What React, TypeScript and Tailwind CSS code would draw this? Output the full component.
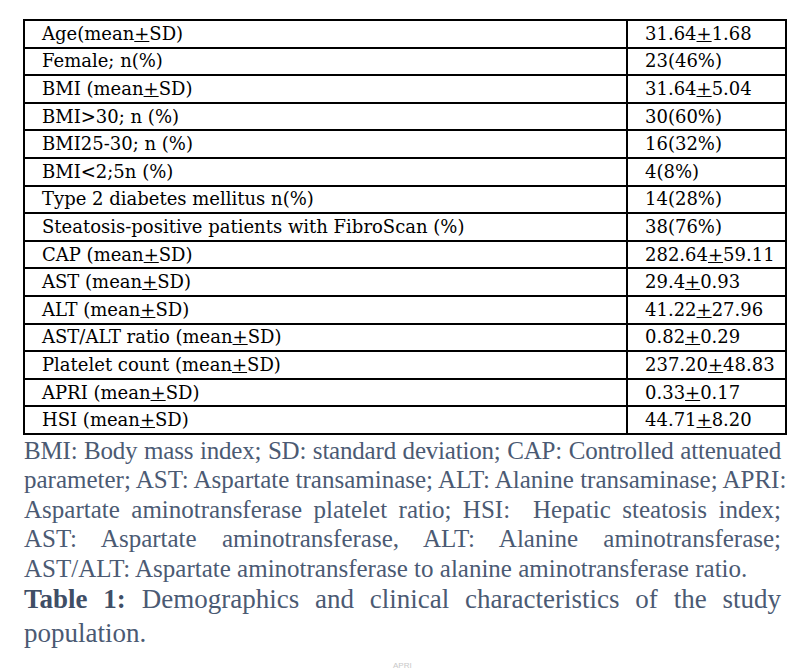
import React from "react";

const rows: [React.ReactNode, React.ReactNode][] = [
  [<>Age(mean<u>+</u>SD)</>, <>31.64<u>+</u>1.68</>],
  ["Female; n(%)", "23(46%)"],
  [<>BMI (mean<u>+</u>SD)</>, <>31.64<u>+</u>5.04</>],
  ["BMI>30; n (%)", "30(60%)"],
  ["BMI25-30; n (%)", "16(32%)"],
  ["BMI<2;5n (%)", "4(8%)"],
  ["Type 2 diabetes mellitus n(%)", "14(28%)"],
  ["Steatosis-positive patients with FibroScan (%)", "38(76%)"],
  [<>CAP (mean<u>+</u>SD)</>, <>282.64<u>+</u>59.11</>],
  [<>AST (mean<u>+</u>SD)</>, <>29.4<u>+</u>0.93</>],
  [<>ALT (mean<u>+</u>SD)</>, <>41.22<u>+</u>27.96</>],
  [<>AST/ALT ratio (mean<u>+</u>SD)</>, <>0.82<u>+</u>0.29</>],
  [<>Platelet count (mean<u>+</u>SD)</>, <>237.20<u>+</u>48.83</>],
  [<>APRI (mean<u>+</u>SD)</>, <>0.33<u>+</u>0.17</>],
  [<>HSI (mean<u>+</u>SD)</>, <>44.71<u>+</u>8.20</>],
];

// footnote lines are broken by hand so they fall as in the print
const notes = [
  "parameter; AST: Aspartate transaminase; ALT: Alanine transaminase; APRI:",
  "Aspartate aminotransferase platelet ratio; HSI:\u00a0 Hepatic steatosis index;",
  "AST: Aspartate aminotransferase, ALT: Alanine aminotransferase;",
];

export default function App() {
  return (
    <div className="w-[812px] h-[669px] bg-white overflow-hidden relative font-['Liberation_Serif',serif]">
      <div className="pl-[23px] pt-[19px]">
        <table className="w-[764px] border-collapse border-2 border-black text-[18px] leading-[22px] text-black font-['DejaVu_Serif',serif]">
          <tbody>
            {rows.map((r, i) => (
              <tr key={i} className="h-[27.6px]">
                <td className="w-[603px] border-2 border-black pl-[17px] py-0">{r[0]}</td>
                <td className="border-2 border-black pl-[17px] py-0">{r[1]}</td>
              </tr>
            ))}
          </tbody>
        </table>
      </div>

      {/* footnote */}
      <div className="ml-[24px] w-[757px] mt-[1px] text-[25px] leading-[29.5px] text-[#4b5a73]">
        <div className="text-justify [text-align-last:justify] whitespace-nowrap tracking-[-0.2px]">
          BMI: Body mass index; SD: standard deviation; CAP: Controlled attenuated
        </div>
        {notes.map((l, i) => (
          <div key={i} className="text-justify [text-align-last:justify] whitespace-nowrap">
            {l}
          </div>
        ))}
        <div>AST/ALT: Aspartate aminotransferase to alanine aminotransferase ratio.</div>
      </div>

      <div className="ml-[24px] w-[757px] -mt-[1px] text-[27px] leading-[34px] text-[#4b5a73]">
        <div className="text-justify [text-align-last:justify]">
          <span className="font-bold text-[#3f4e66]">Table 1:</span> Demographics and clinical characteristics of the study
        </div>
        <div>population.</div>
      </div>

      <div className="absolute left-[393px] top-[660px] text-[8px] text-[#c8c8c8] font-['Liberation_Sans',sans-serif]">
        APRI
      </div>
    </div>
  );
}
